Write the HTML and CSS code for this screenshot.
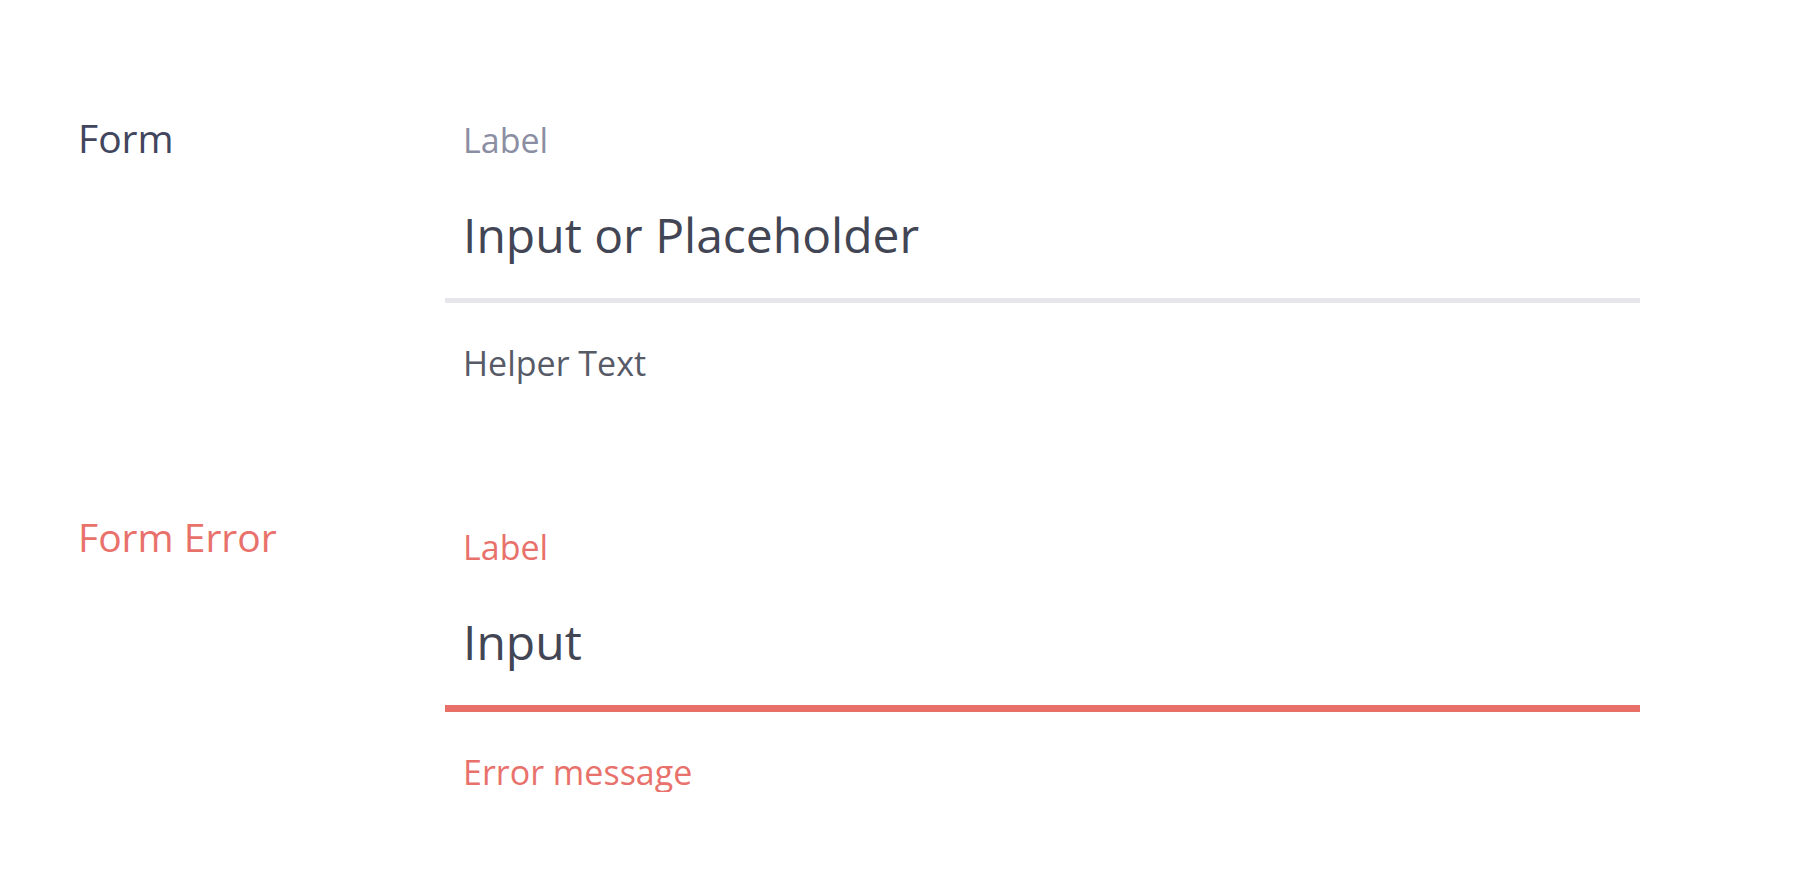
FILE: index.html
```html
<!DOCTYPE html>
<html lang="en">
<head>
<meta charset="utf-8">
<title>Form states</title>
<link rel="stylesheet" href="styles.css">
</head>
<body>
<main class="page">
  <section class="section">
    <h2 class="section-title">Form</h2>
    <div class="field">
      <div class="field-label">Label</div>
      <div class="field-input">Input or Placeholder</div>
      <div class="field-helper">Helper Text</div>
    </div>
  </section>
  <section class="section section--error">
    <h2 class="section-title">Form Error</h2>
    <div class="field">
      <div class="field-label">Label</div>
      <div class="field-input">Input</div>
      <div class="field-helper">Error message</div>
    </div>
  </section>
</main>
</body>
</html>
```

FILE: styles.css
```css
html, body {
  margin: 0;
  padding: 0;
  background: #ffffff;
}

body {
  font-family: "Open Sans", "Noto Sans", sans-serif;
  font-weight: 400;
}

.page {
  display: flex;
  flex-direction: column;
  gap: 127px;
  padding: 111px 0 0 78px;
}

.section {
  display: grid;
  grid-template-columns: 367px 1195px;
  align-items: start;
}

.section-title {
  margin: 0;
  font-size: 39px;
  font-weight: 400;
  line-height: 53px;
  color: #42455e;
}

.field {
  padding-top: 9px;
}

.field-label {
  padding-left: 18px;
  font-size: 34px;
  line-height: 40px;
  color: #8b8ea3;
}

.field-input {
  margin-top: 45px;
  padding: 0 0 33px 18px;
  font-size: 48px;
  line-height: 60px;
  color: #424654;
  border-bottom: 5px solid #e7e7eb;
}

.field-helper {
  margin-top: 40px;
  padding-left: 18px;
  font-size: 34px;
  line-height: 40px;
  color: #575a67;
}

.section--error .section-title,
.section--error .field-label,
.section--error .field-helper {
  color: #e9716b;
}

.section--error .field {
  padding-top: 17px;
}

.section--error .field-input {
  border-bottom: 7px solid #e96f69;
}
```
